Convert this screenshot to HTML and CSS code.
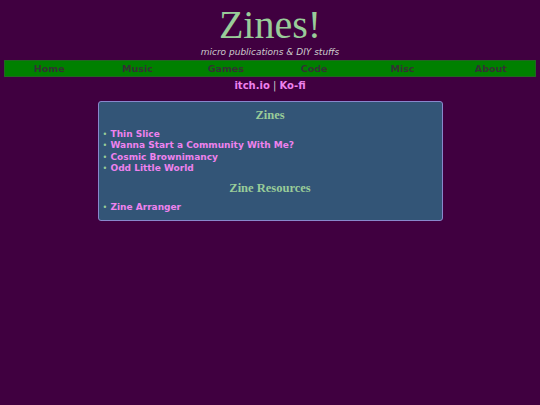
FILE: index.html
```html
<!DOCTYPE html>
<html>
<head>
<meta charset="utf-8">
<link rel="stylesheet" href="styles.css">
</head>
<body>
<header class="top">
  <h1 class="title">Zines!</h1>
  <p class="tagline">micro publications &amp; DIY stuffs</p>
</header>
<nav class="nav">
  <a href="#">Home</a>
  <a href="#">Music</a>
  <a href="#">Games</a>
  <a href="#">Code</a>
  <a href="#">Misc</a>
  <a href="#">About</a>
</nav>
<p class="extlinks"><a href="#">itch.io</a> | <a href="#">Ko-fi</a></p>
<main class="box">
  <h2 class="heading">Zines</h2>
  <ul class="list">
    <li><a href="#">Thin Slice</a></li>
    <li><a href="#">Wanna Start a Community With Me?</a></li>
    <li><a href="#">Cosmic Brownimancy</a></li>
    <li><a href="#">Odd Little World</a></li>
  </ul>
  <h2 class="heading">Zine Resources</h2>
  <ul class="list">
    <li><a href="#">Zine Arranger</a></li>
  </ul>
</main>
</body>
</html>
```
FILE: styles.css
```css
html, body {
  margin: 0;
  padding: 0;
}
body {
  background: #400040;
  color: #99cc99;
  font-family: "DejaVu Sans", Verdana, sans-serif;
  font-size: 10px;
  padding: 0 4px;
}
a {
  color: #ee82ee;
  font-weight: bold;
  text-decoration: none;
}
.top {
  text-align: center;
}
.title {
  margin: 0;
  padding-top: 4px;
  font-family: "Liberation Serif", "Times New Roman", serif;
  font-weight: normal;
  font-size: 40px;
  line-height: 42px;
  color: #99cc99;
}
.tagline {
  margin: 0;
  font-style: italic;
  font-size: 9px;
  line-height: 12px;
  color: #cccccc;
}
.nav {
  display: flex;
  margin-top: 2px;
  background: #008000;
  border: 1px solid #226622;
}
.nav a {
  flex: 1;
  text-align: center;
  color: #333333;
  font-size: 9.5px;
  line-height: 15px;
}
.extlinks {
  margin: 2px 0 0;
  text-align: center;
  line-height: 14px;
  color: #cccccc;
}
.box {
  width: 343px;
  margin: 8px auto 0;
  background: #335577;
  border: 1px solid #8888cc;
  border-radius: 3px;
  padding: 0 0 6px;
}
.heading {
  margin: 0;
  text-align: center;
  font-family: "Liberation Serif", "Times New Roman", serif;
  font-size: 12.5px;
  line-height: 18px;
  padding: 4px 0 5px;
  color: #99cc99;
}
.list {
  margin: 0 0 1px;
  padding-left: 4px;
  list-style: none;
}
.list:last-child {
  margin-bottom: 0;
}
.list li {
  line-height: 11.33px;
  font-size: 9px;
}
.list li::before {
  content: "\2022";
  display: inline-block;
  width: 8px;
  color: #99cc99;
  font-size: 8px;
}
```
